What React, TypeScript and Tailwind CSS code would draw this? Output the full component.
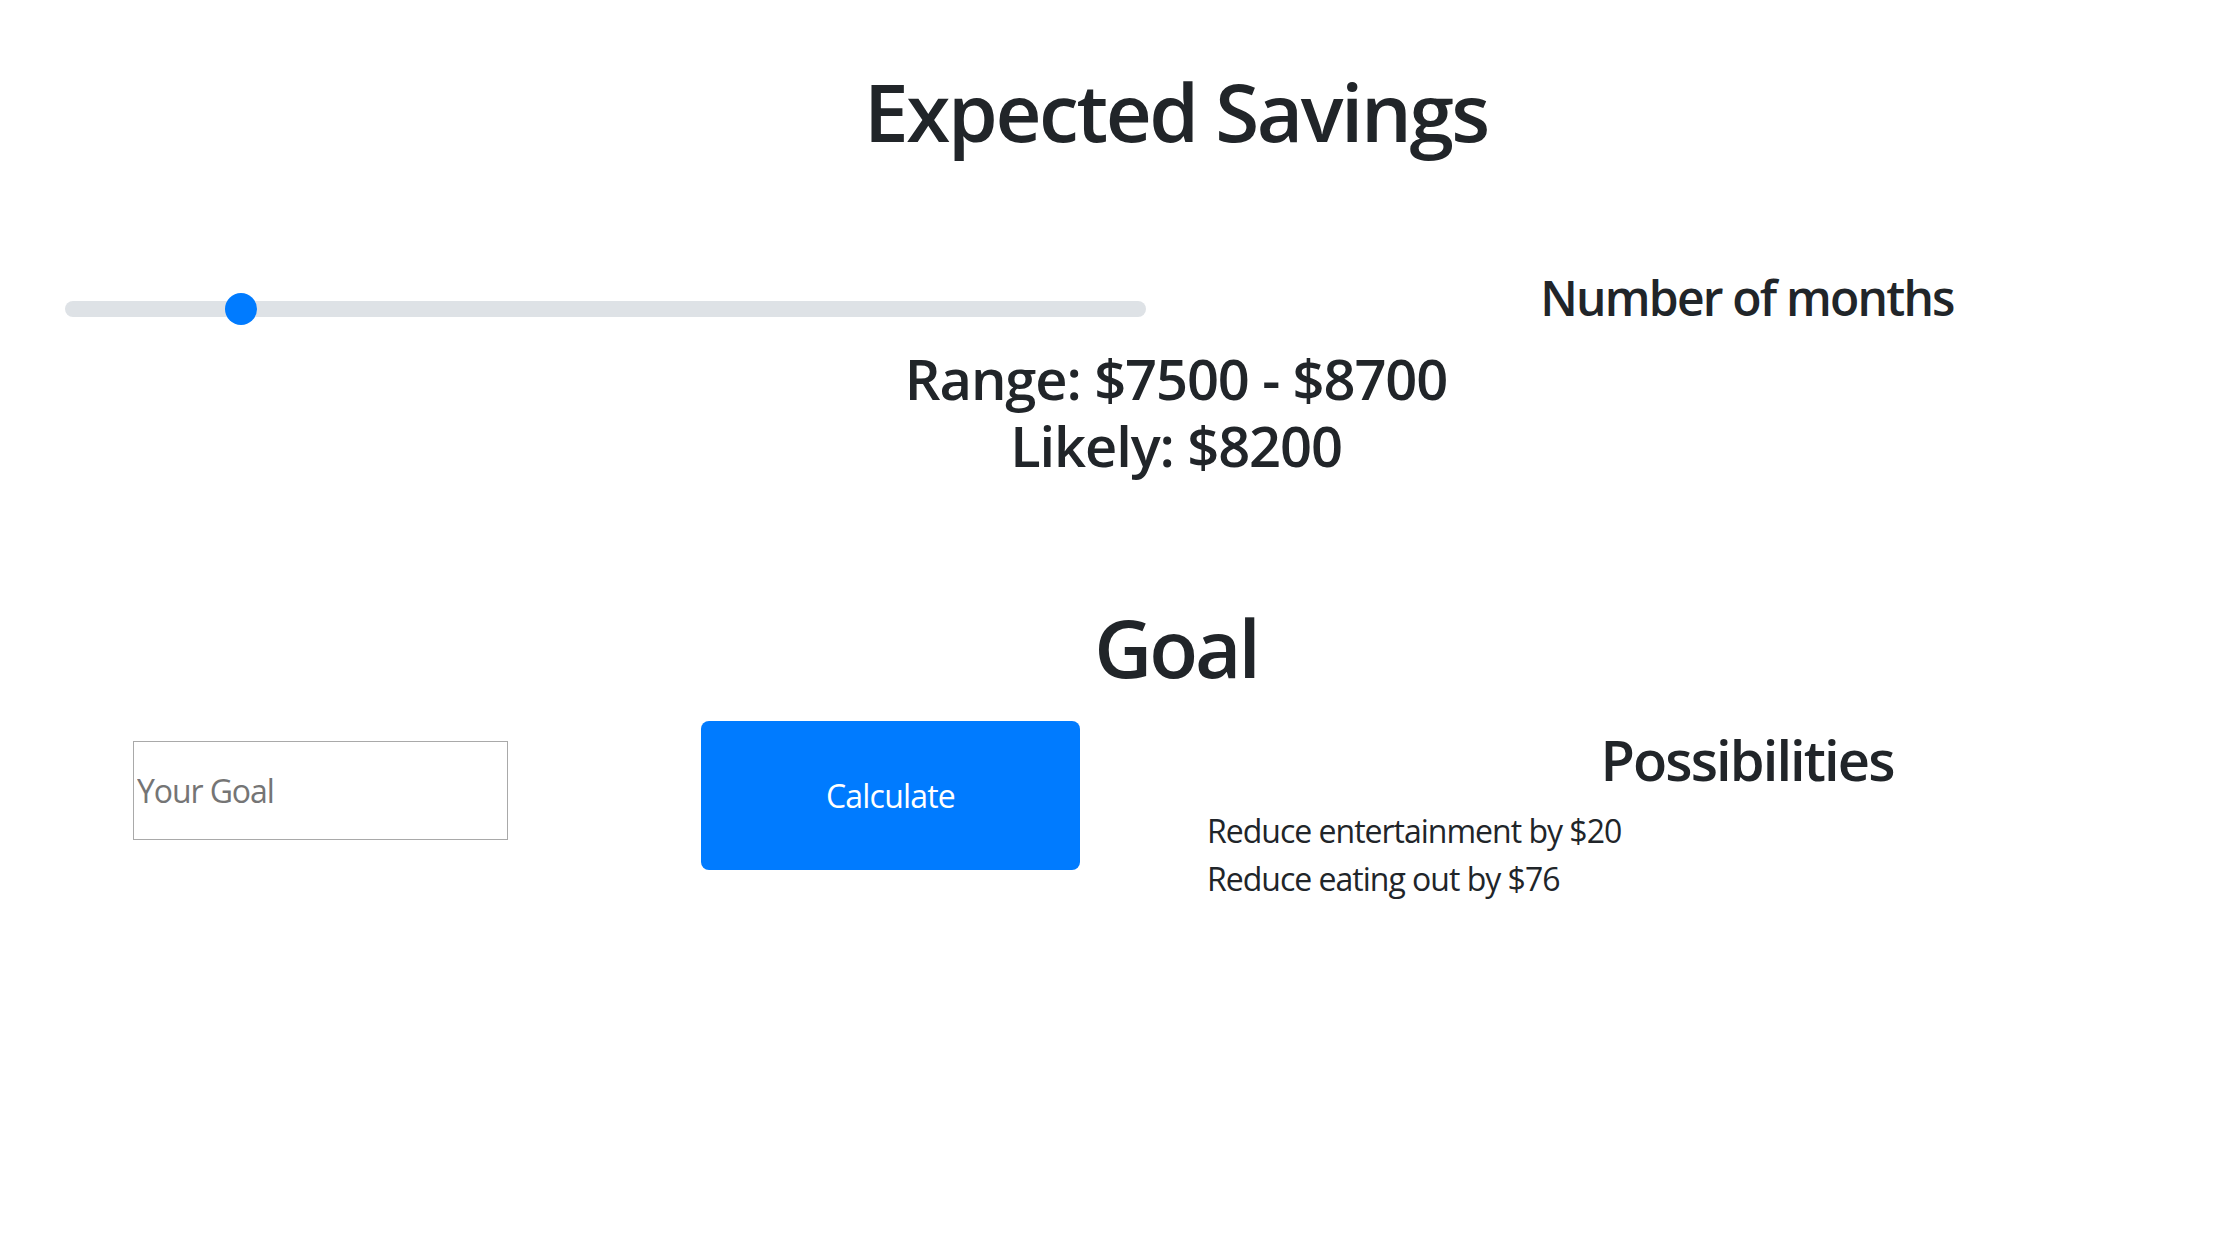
import React from "react";

export default function App() {
  return (
    <div
      className="w-[2226px] h-[1258px] overflow-hidden bg-white text-[#212529]"
      style={{ fontFamily: '"Open Sans", "Noto Sans", sans-serif' }}
    >
      <div className="w-[2352px]">
        <h1 className="pt-[63px] text-center text-[80px] leading-[96px] font-semibold tracking-[-2.4px]">
          Expected Savings
        </h1>

        <div className="flex h-[186px]">
          <div className="w-[1176px] pl-[65px] pr-[30px] pt-[142px]">
            <div className="relative h-[16px] rounded-full bg-[#dee2e6]">
              <div className="absolute left-[160px] top-[-8px] h-[32px] w-[32px] rounded-full bg-[#007bff]" />
            </div>
          </div>
          <div className="w-[1142px] pt-[110px] text-center">
            <h4 className="text-[48px] leading-[57.6px] font-semibold tracking-[-1.8px]">Number of months</h4>
          </div>
        </div>

        <div className="text-center text-[56px] leading-[67.2px] font-semibold tracking-[-1.1px]">
          <div>Range: $7500 - $8700</div>
          <div>Likely: $8200</div>
        </div>

        <h1 className="mt-[120px] text-center text-[80px] leading-[96px] font-semibold tracking-[-3px]">Goal</h1>

        <div className="flex items-start">
          <div className="w-[588px]">
            <input
              type="text"
              placeholder="Your Goal"
              className="ml-[133px] mt-[46px] h-[99px] w-[375px] border border-[#a9a9a9] px-[3px] text-[32px] tracking-[-1.1px] text-[#212529] placeholder:text-[#757575] outline-none"
            />
          </div>
          <div className="w-[588px]">
            <button className="ml-[113px] mt-[26px] h-[149px] w-[379px] rounded-[8px] bg-[#007bff] text-[32px] tracking-[-0.8px] text-white">
              Calculate
            </button>
          </div>
          <div className="w-[1142px] pt-[31px]">
            <h2 className="text-center text-[56px] leading-[67.2px] font-semibold tracking-[-1.9px]">Possibilities</h2>
            <ul className="mt-[13px] pl-[31px] text-[32px] leading-[48px] tracking-[-1px]">
              <li>Reduce entertainment by $20</li>
              <li>Reduce eating out by $76</li>
            </ul>
          </div>
        </div>
      </div>
    </div>
  );
}
